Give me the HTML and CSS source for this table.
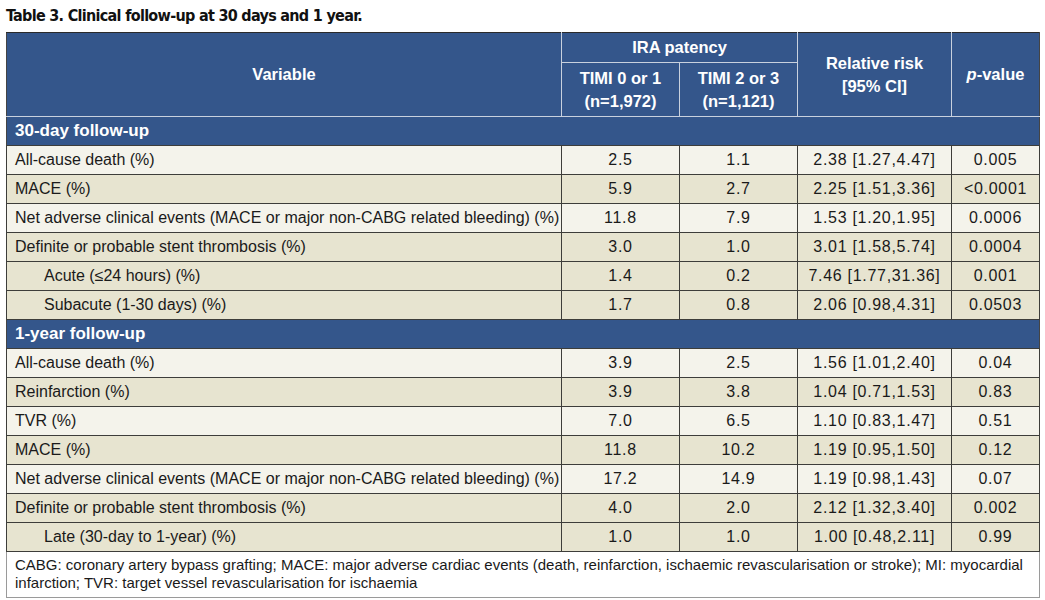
FILE: index.html
```html
<!DOCTYPE html>
<html>
<head>
<meta charset="utf-8">
<link rel="stylesheet" href="styles.css">
</head>
<body>
<div class="page">
  <h1 class="title">Table 3. Clinical follow-up at 30 days and 1 year.</h1>
  <table class="data">
    <colgroup>
      <col class="c-var"><col class="c-a"><col class="c-b"><col class="c-rr"><col class="c-p">
    </colgroup>
    <thead>
      <tr class="h1row">
        <th rowspan="2" class="hvar">Variable</th>
        <th colspan="2">IRA patency</th>
        <th rowspan="2">Relative risk<br>[95% CI]</th>
        <th rowspan="2"><i>p</i>-value</th>
      </tr>
      <tr class="h2row">
        <th>TIMI 0 or 1<br>(n=1,972)</th>
        <th>TIMI 2 or 3<br>(n=1,121)</th>
      </tr>
    </thead>
    <tbody>
      <tr class="sec"><td colspan="5">30-day follow-up</td></tr>
      <tr class="lt"><td>All-cause death (%)</td><td>2.5</td><td>1.1</td><td>2.38 [1.27,4.47]</td><td>0.005</td></tr>
      <tr class="dk"><td>MACE (%)</td><td>5.9</td><td>2.7</td><td>2.25 [1.51,3.36]</td><td>&lt;0.0001</td></tr>
      <tr class="lt"><td>Net adverse clinical events (MACE or major non-CABG related bleeding) (%)</td><td>11.8</td><td>7.9</td><td>1.53 [1.20,1.95]</td><td>0.0006</td></tr>
      <tr class="dk"><td>Definite or probable stent thrombosis (%)</td><td>3.0</td><td>1.0</td><td>3.01 [1.58,5.74]</td><td>0.0004</td></tr>
      <tr class="dk sub"><td>Acute (≤24 hours) (%)</td><td>1.4</td><td>0.2</td><td>7.46 [1.77,31.36]</td><td>0.001</td></tr>
      <tr class="dk sub soft"><td>Subacute (1-30 days) (%)</td><td>1.7</td><td>0.8</td><td>2.06 [0.98,4.31]</td><td>0.0503</td></tr>
      <tr class="sec"><td colspan="5">1-year follow-up</td></tr>
      <tr class="lt"><td>All-cause death (%)</td><td>3.9</td><td>2.5</td><td>1.56 [1.01,2.40]</td><td>0.04</td></tr>
      <tr class="dk"><td>Reinfarction (%)</td><td>3.9</td><td>3.8</td><td>1.04 [0.71,1.53]</td><td>0.83</td></tr>
      <tr class="lt"><td>TVR (%)</td><td>7.0</td><td>6.5</td><td>1.10 [0.83,1.47]</td><td>0.51</td></tr>
      <tr class="dk"><td>MACE (%)</td><td>11.8</td><td>10.2</td><td>1.19 [0.95,1.50]</td><td>0.12</td></tr>
      <tr class="lt"><td>Net adverse clinical events (MACE or major non-CABG related bleeding) (%)</td><td>17.2</td><td>14.9</td><td>1.19 [0.98,1.43]</td><td>0.07</td></tr>
      <tr class="dk"><td>Definite or probable stent thrombosis (%)</td><td>4.0</td><td>2.0</td><td>2.12 [1.32,3.40]</td><td>0.002</td></tr>
      <tr class="dk sub soft"><td>Late (30-day to 1-year) (%)</td><td>1.0</td><td>1.0</td><td>1.00 [0.48,2.11]</td><td>0.99</td></tr>
    </tbody>
    <tfoot>
      <tr><td colspan="5">CABG: coronary artery bypass grafting; MACE: major adverse cardiac events (death, reinfarction, ischaemic revascularisation or stroke); MI: myocardial infarction; TVR: target vessel revascularisation for ischaemia</td></tr>
    </tfoot>
  </table>
</div>
</body>
</html>
```

FILE: styles.css
```css
html, body {
  margin: 0;
  padding: 0;
  background: #ffffff;
}
.page {
  padding: 6px 6px 0 6px;
  font-family: "Liberation Sans", Arial, sans-serif;
  color: #1a1a1a;
}
.title {
  margin: 0;
  height: 26px;
  font-family: "Liberation Sans Narrow", "DejaVu Sans Condensed", "Liberation Sans", sans-serif;
  font-stretch: condensed;
  font-weight: 700;
  font-size: 16px;
  line-height: 20px;
  letter-spacing: -0.7px;
  color: #111;
}
.data {
  width: 1033px;
  border-collapse: collapse;
  table-layout: fixed;
}
.c-var { width: 555px; }
.c-a { width: 118px; }
.c-b { width: 118px; }
.c-rr { width: 154px; }
.c-p { width: 88px; }

.data thead th {
  background: #34568b;
  color: #ffffff;
  font-weight: 700;
  font-size: 16.5px;
  line-height: 23px;
  text-align: center;
  padding: 0;
  border: 1px solid #c9d1de;
}
.data thead tr:first-child th {
  border-top: 1px solid #2a2a2a;
}
.data thead th:first-child { border-left: 1px solid #444; }
.data thead th:last-child { border-right: 1px solid #444; }
.h1row { height: 30px; }
.h2row { height: 54px; }

.data tbody td {
  height: 28px;
  padding: 0;
  font-size: 16px;
  text-align: center;
  letter-spacing: 0.7px;
  border: 1px solid #3d3d3a;
}
.data tbody td:first-child {
  text-align: left;
  padding-left: 8px;
  letter-spacing: 0;
}
.data tbody tr.sub td:first-child {
  padding-left: 37px;
}
.data tbody tr.soft td {
  border-top-color: #8f8d80;
}
.lt td { background: #f4f3eb; }
.dk td { background: #e7e4d0; }

.data tbody tr.sec td {
  background: #34568b;
  color: #ffffff;
  font-weight: 700;
  font-size: 17px;
  text-align: left;
  padding-left: 8px;
  letter-spacing: 0;
  border-left: 1px solid #444;
  border-right: 1px solid #444;
  border-top: 1px solid #c9d1de;
}

.data tfoot td {
  padding: 4px 8px 5px 8px;
  font-size: 15px;
  line-height: 18px;
  color: #1a1a1a;
  background: #ffffff;
  border: 1px solid #9a9a9a;
  border-top: 1px solid #3d3d3a;
}
```
